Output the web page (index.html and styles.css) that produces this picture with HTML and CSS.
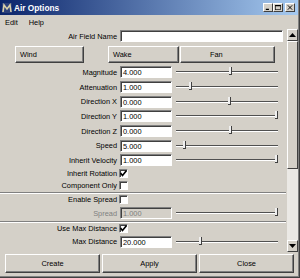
FILE: index.html
```html
<!DOCTYPE html>
<html lang="en">
<head>
  <meta charset="UTF-8">
  <title>Air Options</title>
  <link rel="stylesheet" href="styles.css">
</head>
<body>

  <div class="window">

    <div class="titlebar">
      <svg class="app-icon" width="10" height="10" viewBox="0 0 10 10">
        <rect width="10" height="10" fill="#2a3f7a"/>
        <path d="M1 9 L2 2 L5 6 L8 2 L9 9" fill="none" stroke="#d8cfa8" stroke-width="1.6"/>
      </svg>
      <span class="title">Air Options</span>
      <div class="caption">
        <span class="cap-btn"><svg width="9" height="8" viewBox="0 0 9 8"><rect x="1" y="6" width="5" height="2" fill="#000"/></svg></span>
        <span class="cap-btn"><svg width="9" height="8" viewBox="0 0 9 8"><rect x="0.5" y="0.5" width="8" height="7" fill="none" stroke="#000"/><rect x="0" y="0" width="9" height="2" fill="#000"/></svg></span>
        <span class="cap-btn close"><svg width="9" height="8" viewBox="0 0 9 8"><path d="M1 0.5 L8 7.5 M8 0.5 L1 7.5" stroke="#000" stroke-width="1.5"/></svg></span>
      </div>
    </div>

    <div class="menubar">
      <span>Edit</span>
      <span>Help</span>
    </div>

    <div class="main">
      <div class="panel">

        <div class="row name-row">
          <span class="label">Air Field Name</span>
          <div class="field wide"></div>
        </div>

        <div class="presets">
          <button class="btn wind">Wind</button>
          <button class="btn wake">Wake</button>
          <button class="btn fan">Fan</button>
        </div>

        <div class="row">
          <span class="label">Magnitude</span>
          <div class="field">4.000</div>
          <div class="slider"><span class="thumb" style="left:53px"></span></div>
        </div>
        <div class="row">
          <span class="label">Attenuation</span>
          <div class="field">1.000</div>
          <div class="slider"><span class="thumb" style="left:13px"></span></div>
        </div>
        <div class="row">
          <span class="label">Direction X</span>
          <div class="field">0.000</div>
          <div class="slider"><span class="thumb" style="left:52px"></span></div>
        </div>
        <div class="row">
          <span class="label">Direction Y</span>
          <div class="field">1.000</div>
          <div class="slider"><span class="thumb" style="left:99px"></span></div>
        </div>
        <div class="row">
          <span class="label">Direction Z</span>
          <div class="field">0.000</div>
          <div class="slider"><span class="thumb" style="left:53px"></span></div>
        </div>
        <div class="row">
          <span class="label">Speed</span>
          <div class="field">5.000</div>
          <div class="slider"><span class="thumb" style="left:7px"></span></div>
        </div>
        <div class="row">
          <span class="label">Inherit Velocity</span>
          <div class="field">1.000</div>
          <div class="slider"><span class="thumb" style="left:99px"></span></div>
        </div>

        <div class="row check-row">
          <span class="label">Inherit Rotation</span>
          <span class="checkbox checked"><svg width="7" height="7" viewBox="0 0 7 7"><path d="M0.5 3 L2.5 5.5 L6.5 0.5" fill="none" stroke="#000" stroke-width="1.6"/></svg></span>
        </div>
        <div class="row check-row">
          <span class="label">Component Only</span>
          <span class="checkbox"></span>
        </div>

        <div class="separator"></div>

        <div class="row check-row">
          <span class="label">Enable Spread</span>
          <span class="checkbox"></span>
        </div>
        <div class="row disabled">
          <span class="label">Spread</span>
          <div class="field">1.000</div>
          <div class="slider"><span class="thumb" style="left:99px"></span></div>
        </div>

        <div class="separator"></div>

        <div class="row check-row">
          <span class="label">Use Max Distance</span>
          <span class="checkbox checked"><svg width="7" height="7" viewBox="0 0 7 7"><path d="M0.5 3 L2.5 5.5 L6.5 0.5" fill="none" stroke="#000" stroke-width="1.6"/></svg></span>
        </div>
        <div class="row">
          <span class="label">Max Distance</span>
          <div class="field">20.000</div>
          <div class="slider"><span class="thumb" style="left:23px"></span></div>
        </div>

      </div>

      <div class="scrollbar">
        <span class="arrow up"><svg width="7" height="4" viewBox="0 0 7 4"><path d="M0 4 L3.5 0 L7 4 Z" fill="#000"/></svg></span>
        <span class="scroll-thumb"></span>
        <span class="track"></span>
        <span class="arrow down"><svg width="7" height="4" viewBox="0 0 7 4"><path d="M0 0 L3.5 4 L7 0 Z" fill="#000"/></svg></span>
      </div>
    </div>

    <div class="footer">
      <button class="btn">Create</button>
      <button class="btn">Apply</button>
      <button class="btn">Close</button>
    </div>

  </div>

</body>
</html>
```

FILE: styles.css
```css
* {
  box-sizing: border-box;
}
body {
  margin: 0;
  background-color: #d4d0c8;
  font-family: "Liberation Sans", Arial, sans-serif;
  font-size: 7.4px;
  color: #000;
}
.window {
  width: 300px;
  height: 278px;
  display: flex;
  flex-direction: column;
  background-color: #d4d0c8;
  border-right: 1px solid #404040;
  border-bottom: 1px solid #404040;
  box-shadow: inset -1px -1px 0 #808080;
  overflow: hidden;
}
.titlebar {
  height: 15px;
  flex: none;
  display: flex;
  align-items: center;
  padding: 0 3px 0 2px;
  background: linear-gradient(to right, #0a246a, #a6caf0);
  margin-right: 1px;
}
.app-icon {
  margin-right: 2px;
}
.title {
  color: #fff;
  font-weight: bold;
  font-size: 8.3px;
  flex: 1;
}
.caption {
  display: flex;
}
.cap-btn {
  width: 10px;
  height: 9px;
  background-color: #d4d0c8;
  display: flex;
  align-items: center;
  justify-content: center;
  border-top: 1px solid #fff;
  border-left: 1px solid #fff;
  border-right: 1px solid #404040;
  border-bottom: 1px solid #404040;
}
.cap-btn svg {
  width: 6px;
  height: 5px;
}
.cap-btn.close {
  margin-left: 2px;
}
.menubar {
  height: 14px;
  flex: none;
  display: flex;
  align-items: center;
  gap: 11px;
  padding-left: 5px;
}
.main {
  flex: 1;
  display: flex;
  min-height: 0;
  padding-right: 1px;
}
.panel {
  flex: 1;
  padding-top: 1px;
  overflow: hidden;
}
.row {
  display: flex;
  align-items: center;
  height: 14.7px;
}
.label {
  width: 117px;
  flex: none;
  text-align: right;
  white-space: nowrap;
}
.field {
  width: 52px;
  height: 12px;
  margin-left: 3px;
  flex: none;
  background-color: #fff;
  border-top: 1px solid #808080;
  border-left: 1px solid #808080;
  border-right: 1px solid #fff;
  border-bottom: 1px solid #fff;
  box-shadow: inset 1px 1px 0 #404040;
  padding: 1px 0 0 2px;
  line-height: 9px;
}
.field.wide {
  width: 163px;
}
.name-row {
  height: 12px;
}
.slider {
  position: relative;
  width: 102px;
  height: 2px;
  margin-left: 4px;
  border-top: 1px solid #505050;
  border-bottom: 1px solid #fff;
}
.thumb {
  position: absolute;
  top: -5px;
  width: 3px;
  height: 8px;
  background-color: #f0f0f0;
  border-right: 1px solid #404040;
  border-bottom: 1px solid #404040;
}
.presets {
  display: flex;
  height: 17px;
  margin: 4px 0 2px 0;
}
.btn {
  font-family: inherit;
  font-size: inherit;
  color: #000;
  background-color: #d4d0c8;
  border-top: 1px solid #fff;
  border-left: 1px solid #fff;
  border-right: 1px solid #404040;
  border-bottom: 1px solid #404040;
  box-shadow: inset -1px -1px 0 #808080;
  padding: 0;
}
.presets .btn {
  text-align: left;
  padding-left: 4px;
}
.wind {
  width: 69px;
  margin-left: 15px;
}
.wake {
  width: 71px;
  margin-left: 24px;
}
.fan {
  width: 95px;
  margin-left: 1px;
}
.presets .fan {
  padding-left: 29px;
}
.check-row {
  height: 12px;
}
.checkbox {
  width: 9px;
  height: 9px;
  margin-left: 2px;
  background-color: #fff;
  border-top: 1px solid #808080;
  border-left: 1px solid #808080;
  border-right: 1px solid #fff;
  border-bottom: 1px solid #fff;
  box-shadow: inset 1px 1px 0 #404040;
  display: flex;
  align-items: center;
  justify-content: center;
}
.separator {
  height: 2px;
  border-top: 1px solid #808080;
  border-bottom: 1px solid #fff;
}
.disabled .label {
  color: #808080;
}
.disabled .field {
  background-color: #d4d0c8;
  color: #808080;
}
.scrollbar {
  width: 11px;
  flex: none;
  display: flex;
  flex-direction: column;
  margin-left: 1px;
}
.arrow {
  height: 12px;
  flex: none;
  display: flex;
  align-items: center;
  justify-content: center;
  background-color: #d4d0c8;
  border-top: 1px solid #fff;
  border-left: 1px solid #fff;
  border-right: 1px solid #404040;
  border-bottom: 1px solid #404040;
}
.scroll-thumb {
  height: 128px;
  flex: none;
  background-color: #d4d0c8;
  border-top: 1px solid #fff;
  border-left: 1px solid #fff;
  border-right: 1px solid #404040;
  border-bottom: 1px solid #404040;
}
.track {
  flex: 1;
  background-color: #ebe9e5;
}
.footer {
  height: 25px;
  flex: none;
  display: flex;
  gap: 2px;
  padding: 2px 5px 4px 5px;
}
.footer .btn {
  flex: 1;
}
```
